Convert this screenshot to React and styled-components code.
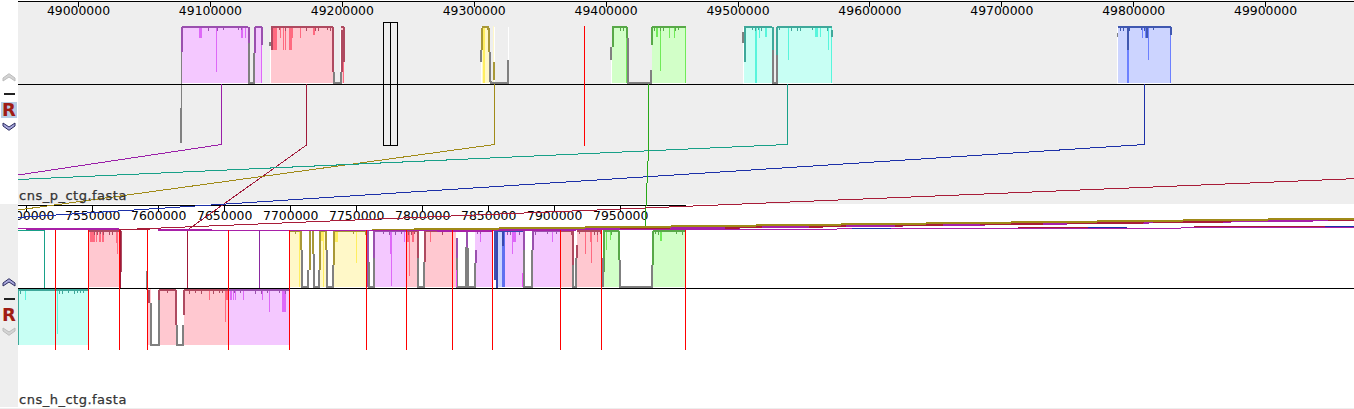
import React from 'react'
import styled, { createGlobalStyle } from 'styled-components'

const GlobalStyle = createGlobalStyle`
  html, body {
    margin: 0;
    padding: 0;
    background: #fff;
    overflow: hidden;
  }
`

const CHART_WIDTH = 1336
const CHART_LEFT = 18

// lcb colours: fill, spike, stroke
const PURPLE = { fill: '#f4c8ff', spike: '#de68f8', stroke: '#9a50ae' }
const PINK = { fill: '#ffc8d0', spike: '#ff6a80', stroke: '#ae4a60' }
const YELLOW = { fill: '#fff8c8', spike: '#ffee60', stroke: '#a89838' }
const GREEN = { fill: '#d2ffc8', spike: '#70ea58', stroke: '#58a848' }
const CYAN = { fill: '#c8fff4', spike: '#58f5dc', stroke: '#3fa89a' }
const BLUE = { fill: '#ccd4ff', spike: '#6c80ff', stroke: '#4058b0' }
const GREY = '#808080'

const TOP_TICKS = Array.from({ length: 10 }, (_, i) => ({
  x: 78.5 + 131.9 * i,
  label: String(49000000 + i * 100000),
}))
const LOW_TICKS = Array.from({ length: 10 }, (_, i) => ({
  x: 26.7 + 66 * i,
  label: String(7500000 + i * 50000),
}))

const CRIMSON = '#a81c38'
const MAGENTA = '#a820a8'
const NAVY = '#1c30a8'

// links between the two genomes, drawn in page coordinates
const LINKS = [
  { c: '#9a1fa8', w: 1, p: '221.5,84 221.5,144.5 18,175' },
  { c: '#a01838', w: 1, p: '306.5,84 306.5,145 188,229.6 187.5,288' },
  { c: '#a08a18', w: 1, p: '494.5,84 494.5,144.5 18,210' },
  { c: '#18a088', w: 1, p: '787.5,84 787.5,144.5 18,179.5' },
  { c: NAVY, w: 1, p: '1144.5,84 1144.5,144.5 18,217.5' },
  { c: '#28a818', w: 1, p: '648.5,84 648.5,150 645,229' },
  { c: CRIMSON, w: 1, p: '1354,178.7 120,229.7' },
  // bundle running to the right of the lower ruler
  { c: MAGENTA, w: 2, p: '437,231.2 1354,220' },
  { c: CRIMSON, w: 2, p: '620,229 670,228.4' },
  { c: CRIMSON, w: 2, p: '725,227.7 762,227.2' },
  { c: CRIMSON, w: 2, p: '809,226.7 846,226.2' },
  { c: CRIMSON, w: 2, p: '895,225.6 943,225' },
  { c: CRIMSON, w: 2, p: '980,224.5 1043,223.7' },
  { c: CRIMSON, w: 2, p: '1067,223.5 1144,222.5' },
  { c: CRIMSON, w: 2, p: '1153,222.4 1232,221.4' },
  { c: CRIMSON, w: 2, p: '1328,220.2 1354,220' },
  { c: '#a08a18', w: 2, p: '372,230 1354,218.5' },
  { c: MAGENTA, w: 1, p: '158,231 1354,227.5' },
  { c: NAVY, w: 1, p: '852,228 891,228' },
  { c: CRIMSON, w: 1, p: '1018,227.5 1088,227.5' },
  { c: NAVY, w: 1, p: '1088,227.5 1128,227' },
  { c: CRIMSON, w: 1, p: '1194,227 1325,226.5' },
  { c: NAVY, w: 1, p: '1325,226.5 1354,226.5' },
  // short runs at the left of the lower panel
  { c: MAGENTA, w: 1, p: '18,228 26,228' },
  { c: MAGENTA, w: 2, p: '26,229 119,229' },
  { c: CRIMSON, w: 1, p: '119,229.5 150,229.5' },
  { c: MAGENTA, w: 2, p: '158,230 212,230' },
  { c: '#18a088', w: 1, p: '18,230.5 44.5,230.5 44.5,288' },
  { c: '#a01838', w: 2, p: '119.5,230 119.5,288' },
  { c: '#8a28a0', w: 1, p: '259.5,230 259.5,288' },
]

// similarity blocks of the upper genome
const TOP_BLOCKS = [
  { x0: 181.5, x1: 247.5, c: PURPLE, spikes: [[199, 3, 38], [216, 1, 72], [241, 2, 38], [245, 1, 38]] },
  { x0: 255, x1: 262, c: PURPLE, spikes: [[261, 1, 83]] },
  { x0: 271, x1: 332.5, c: PINK, spikes: [[272, 5, 50], [280, 1, 38], [283, 1, 50], [285, 1, 50], [289, 3, 50], [292, 1, 38], [300, 1, 38], [313, 2, 35]] },
  { x0: 341, x1: 344, c: PINK, spikes: [[343, 1, 83]] },
  { x0: 481.5, x1: 489, c: YELLOW, spikes: [[483, 2, 83]] },
  { x0: 493, x1: 494, c: YELLOW, flat: true },
  { x0: 612, x1: 627, c: GREEN, spikes: [[626, 1, 83]] },
  { x0: 652, x1: 686, c: GREEN, spikes: [[656, 2, 37], [660, 1, 71], [669, 1, 38], [674, 1, 38], [685, 1, 83]] },
  { x0: 744, x1: 772, c: CYAN, spikes: [[755, 2, 83], [759, 1, 38], [765, 2, 37]] },
  { x0: 777, x1: 832, c: CYAN, spikes: [[788, 1, 60], [815, 3, 37], [820, 1, 37], [828, 1, 50], [831, 1, 83]] },
  { x0: 1117.5, x1: 1170.5, c: BLUE, spikes: [[1127, 2, 83], [1142, 1, 38], [1145, 4, 38], [1148, 1, 60], [1170, 1, 83]] },
]

const TOP_TRACES = [
  { c: PURPLE.stroke, w: 2, d: 'M182 27V52 M248.5 27V43 M255 53V27 M261.5 27V45' },
  { c: GREY, w: 1, d: 'M181.5 52V108' },
  { c: GREY, w: 2, d: 'M248.5 43V60 M249 60V82.5H253.5V53' },
  { c: GREY, w: 2, d: 'M181 108V143 M270 42V46 M333.5 72V82.5H340.5V72' },
  { c: PINK.stroke, w: 2, d: 'M272 28V50 M333 27V72 M341.5 72V30 M344 27V62' },
  { c: YELLOW.stroke, w: 2, d: 'M482 28V50 M489 28V52 M493.5 62V80' },
  { c: GREY, w: 2, d: 'M481 50V62 M489.5 52V80L491 82.5H507.5V60' },
  { c: GREEN.stroke, w: 2, d: 'M612.5 27V47 M627 27V38 M652 27V45' },
  { c: GREY, w: 2, d: 'M611 47V60 M628 38V82.5H651V70' },
  { c: CYAN.stroke, w: 2, d: 'M744.5 27V62 M772.5 27V50 M777 27V55 M832 30V37' },
  { c: GREY, w: 2, d: 'M743 32V43 M773 50V82.5H776.5V55' },
  { c: BLUE.stroke, w: 2, d: 'M1128 27V50 M1147 27V38 M1171 27V35' },
  { c: GREY, w: 1, d: 'M1117 33V37' },
]

const TOP_WHITES = 'M181 27V84 M254.5 45V84 M270.5 30V84 M340.5 30V84 M481 27V84 M494 27V84 M508 27V60 M611.5 47V84 M743.5 27V84 M776.5 27V84 M1117 27V84'

// runs of white under the profiles of the upper genome: [x, width]
const TOP_BASES = [[181, 163], [481, 28], [611, 76], [743, 90], [1117, 54]]

// blocks of the lower genome, row above and row below the centre line
const LOW_BLOCKS = [
  { x0: 89, x1: 119.5, c: PINK, spikes: [[90, 5, 242], [96, 1, 242], [99, 2, 242], [102, 2, 242], [116, 2, 243], [117, 1, 254]] },
  { x0: 290, x1: 301, c: YELLOW, spikes: [[299, 1, 287]] },
  { x0: 319, x1: 326, c: YELLOW, spikes: [[321, 2, 241], [323, 1, 287]] },
  { x0: 333, x1: 367, c: YELLOW, spikes: [[335, 3, 242], [356, 1, 263]] },
  { x0: 375, x1: 406, c: PURPLE, spikes: [[390, 2, 254], [391, 1, 286], [404, 1, 242]] },
  { x0: 406, x1: 417, c: PINK, spikes: [[406, 4, 242], [409, 1, 276], [412, 2, 242]] },
  { x0: 425, x1: 456, c: PINK, spikes: [[430, 1, 242]] },
  { x0: 475, x1: 493, c: PURPLE, spikes: [[480, 1, 242]] },
  { x0: 498, x1: 502, c: BLUE },
  { x0: 502, x1: 505, c: { ...BLUE, fill: '#6070f0' } },
  { x0: 505, x1: 523, c: PURPLE, spikes: [[512, 1, 254], [513, 3, 242]] },
  { x0: 533, x1: 560, c: PURPLE, spikes: [[552, 1, 242]] },
  { x0: 560, x1: 572.5, c: PINK },
  { x0: 577, x1: 602, c: PINK, spikes: [[585, 1, 254], [590, 1, 242], [591, 1, 263], [597, 1, 242]] },
  { x0: 603, x1: 619, c: GREEN, spikes: [[606, 1, 250], [610, 1, 240]] },
  { x0: 653, x1: 685, c: GREEN, spikes: [[660, 2, 241]] },
]

const LOW_TRACES = [
  { c: PINK.stroke, w: 2, d: 'M120.5 231V272' },
  { c: YELLOW.stroke, w: 2, d: 'M301 231V250 M310 231V270 M313 231V254 M319.5 231V270 M326 231V250 M333.5 231V265' },
  { c: GREY, w: 2, d: 'M302 250V286.5H308V270 M313.5 254V286.5H319V270 M327 250V286.5H333V265' },
  { c: PURPLE.stroke, w: 2, d: 'M367.5 231V287 M374 231V258 M467 231V262 M475.5 250V263 M457 238V258 M523.5 231V250 M532.5 231V250' },
  { c: GREY, w: 2, d: 'M368.5 262V286.5H373.5V258 M417.5 258V286.5H424V262 M457 258V286.5H466V247 M468 248V286.5H474.5V263 M523.5 250V286.5H532V250 M573 265V286.5H576V258' },
  { c: PINK.stroke, w: 2, d: 'M417.5 231V258 M425 231V262 M573 231V265 M576.5 245V258' },
  { c: '#ee50f8', w: 1, d: 'M456.5 270V287 M522.5 273V287 M406.5 275V287' },
  { c: '#4050b0', w: 4, d: 'M495.5 231V280' },
  { c: '#3848b0', w: 2, d: 'M497 288V230.5 M503 231V246 M499 230.5H523' },
  { c: GREEN.stroke, w: 2, d: 'M604 231V272 M619 231V260 M652.5 231V265' },
  { c: GREY, w: 2, d: 'M602.5 258V287 M620 260V286.5H651.5V265 M147 271V288 M147 288V290' },
  // row below the centre line
  { c: CYAN.stroke, w: 1, d: 'M18.5 289V345' },
  { c: PINK.stroke, w: 2, d: 'M149 290V303 M159 290V320 M176 290V325 M183.5 290V315' },
  { c: GREY, w: 2, d: 'M150.5 303V345H158.5V300 M176.5 325V345H183V325' },
]

const LOW_UNDER_BLOCKS = [
  { x0: 18, x1: 88, c: CYAN, spikes: [[25, 1, 300], [57, 1, 334], [74, 1, 293]], thin: true },
  { x0: 148, x1: 151, c: PINK, flat: true },
  { x0: 159, x1: 176, c: PINK },
  { x0: 184, x1: 228.5, c: PINK, spikes: [[209, 1, 300], [225, 3, 300], [225, 1, 322]] },
  { x0: 228.5, x1: 289.5, c: PURPLE, spikes: [[230, 2, 300], [233, 1, 300], [235, 1, 300], [243, 1, 300], [262, 1, 300], [269, 1, 312], [282, 4, 312]] },
]

const RED_LINES = [55.5, 88.5, 119.5, 147.5, 228.5, 289.5, 366.5, 406.5, 452.5, 492.5, 560.5, 601.5, 685.5]

// small dents along the top of a profile, stable between renders
const dents = (x0, x1) => {
  const out = []
  for (let x = Math.ceil(x0) + 2; x < x1 - 1; x += 3) {
    const n = Math.abs(Math.sin(x * 12.9898) * 43758.5453) % 1
    if (n > 0.6) out.push({ x, h: 1 + Math.round(n * 2) })
  }
  return out
}

const Block = ({ x0, x1, top, bottom, c, spikes = [], flat }) => (
  <g shapeRendering="crispEdges">
    <rect x={x0} y={top} width={x1 - x0} height={bottom - top} fill={c.fill} />
    {spikes.map(([x, w, end]) => (
      <rect key={`${x}-${end}`} x={x} y={top} width={w} height={end - top} fill={c.spike} />
    ))}
    {!flat && <rect x={x0} y={top} width={x1 - x0} height={2} fill={c.stroke} />}
    {!flat &&
      dents(x0, x1).map(d => (
        <rect key={d.x} x={d.x} y={top + 1} width={1} height={d.h + 1} fill={c.stroke} />
      ))}
  </g>
)

const Traces = ({ items }) => (
  <g fill="none" shapeRendering="crispEdges">
    {items.map((t, i) => (
      <path key={i} d={t.d} stroke={t.c} strokeWidth={t.w} />
    ))}
  </g>
)

const Links = () => (
  <g fill="none" shapeRendering="crispEdges">
    {LINKS.map((l, i) => (
      <polyline key={i} points={l.p} stroke={l.c} strokeWidth={l.w} />
    ))}
  </g>
)

const Ruler = ({ ticks, y, baseline, end }) => (
  <g>
    <g shapeRendering="crispEdges">
      <line x1={CHART_LEFT} x2={end} y1={y} y2={y} stroke="#000" />
      {ticks.map(t => (
        <line key={t.x} x1={t.x} x2={t.x} y1={y} y2={y + 5} stroke="#000" />
      ))}
    </g>
    {ticks.map(t => (
      <TickLabel key={t.label} x={t.x} y={baseline}>
        {t.label}
      </TickLabel>
    ))}
  </g>
)

const Chevron = ({ up, muted }) => (
  <ChevronIcon viewBox="0 0 14 9" $muted={muted}>
    <path d={up ? 'M1 5 7 .7 13 5V8L7 4 1 8Z' : 'M1 1 7 5 13 1V4L7 8.3 1 4Z'} />
  </ChevronIcon>
)

const App = () => (
  <Page>
    <GlobalStyle />
    <Track>
      <Rail $top={72} $bg="#ffffff">
        <Chevron up muted />
        <MinusMark />
        <RButton $active>R</RButton>
        <Chevron />
      </Rail>
      <Canvas $bg="#eeeeee" $h={203}>
        <svg width={CHART_WIDTH} height={203} viewBox={`18 1 ${CHART_WIDTH} 203`}>
          <path d={TOP_WHITES} stroke="#fff" fill="none" shapeRendering="crispEdges" />
          {TOP_BASES.map(([x, w]) => (
            <rect key={x} x={x} y={83} width={w} height={1} fill="#fff" />
          ))}
          {TOP_BLOCKS.map(b => (
            <Block key={b.x0} {...b} top={26} bottom={83} />
          ))}
          <Traces items={TOP_TRACES} />
          <Ruler ticks={TOP_TICKS} y={1.5} baseline={15} end={1354} />
          <line x1={18} x2={1354} y1={84.5} y2={84.5} stroke="#000" shapeRendering="crispEdges" />
          <Links />
          <g shapeRendering="crispEdges" fill="none">
            <path d="M584.5 26V146" stroke="#ff0000" />
            <rect x={383.5} y={22.5} width={7} height={123} stroke="#000" />
            <rect x={390.5} y={22.5} width={7} height={123} stroke="#000" />
          </g>
        </svg>
        <TrackName $bottom={1}>cns_p_ctg.fasta</TrackName>
      </Canvas>
    </Track>
    <Track>
      <Rail $top={74} $bg="#eeeeee">
        <Chevron up />
        <MinusMark />
        <RButton>R</RButton>
        <Chevron muted />
      </Rail>
      <Canvas $bg="#ffffff" $h={203}>
        <svg width={CHART_WIDTH} height={203} viewBox={`18 204 ${CHART_WIDTH} 203`}>
          {LOW_BLOCKS.map(b => (
            <Block key={b.x0} {...b} top={230} bottom={287} />
          ))}
          {LOW_UNDER_BLOCKS.map(b => (
            <Block key={b.x0} {...b} top={289} bottom={345} />
          ))}
          <Traces items={LOW_TRACES} />
          <Ruler ticks={LOW_TICKS} y={205.5} baseline={219.5} end={686} />
          <Links />
          <line x1={18} x2={1354} y1={288.5} y2={288.5} stroke="#000" shapeRendering="crispEdges" />
          <g shapeRendering="crispEdges">
            {RED_LINES.map(x => (
              <line key={x} x1={x} x2={x} y1={230} y2={350} stroke="#ff0000" />
            ))}
          </g>
        </svg>
        <TrackName $bottom={0}>cns_h_ctg.fasta</TrackName>
      </Canvas>
    </Track>
  </Page>
)

export default App

const Page = styled.div`
  width: 1354px;
  height: 409px;
  box-sizing: border-box;
  padding-top: 1px;
  display: flex;
  flex-direction: column;
  background: #fff;
  border-bottom: 1px solid #eee;
  font-family: 'DejaVu Sans', sans-serif;
`

const Track = styled.section`
  display: flex;
`

const Rail = styled.div`
  width: 18px;
  flex: none;
  box-sizing: border-box;
  padding-top: ${p => p.$top}px;
  display: flex;
  flex-direction: column;
  align-items: center;
  background: ${p => p.$bg};
`

const ChevronIcon = styled.svg`
  width: 14px;
  height: 9px;
  display: block;
  fill: ${p => (p.$muted ? '#d4d4d4' : '#a8a8dc')};
  stroke: ${p => (p.$muted ? '#bcbcbc' : '#2a2a60')};
  stroke-width: 1;
`

const MinusMark = styled.span`
  width: 11px;
  height: 2px;
  margin: 11px 0 7px;
  background: #222;
`

const RButton = styled.span`
  width: 16px;
  height: 16px;
  line-height: 16px;
  margin-bottom: 4px;
  text-align: center;
  font-size: 18px;
  font-weight: 700;
  color: #a01c14;
  background: ${p => (p.$active ? '#b8cde4' : 'transparent')};
`

const Canvas = styled.div`
  position: relative;
  flex: 1;
  height: ${p => p.$h}px;
  background: ${p => p.$bg};
  overflow: hidden;

  svg {
    display: block;
  }
`

const TickLabel = styled.text`
  font-family: 'DejaVu Sans', sans-serif;
  font-size: 12.4px;
  text-anchor: middle;
  fill: #000;
`

const TrackName = styled.span`
  position: absolute;
  left: 1px;
  bottom: ${p => p.$bottom}px;
  font-size: 13px;
  line-height: 14px;
  letter-spacing: 0.5px;
  color: #333;
  -webkit-text-stroke: 0.25px #333;
`
